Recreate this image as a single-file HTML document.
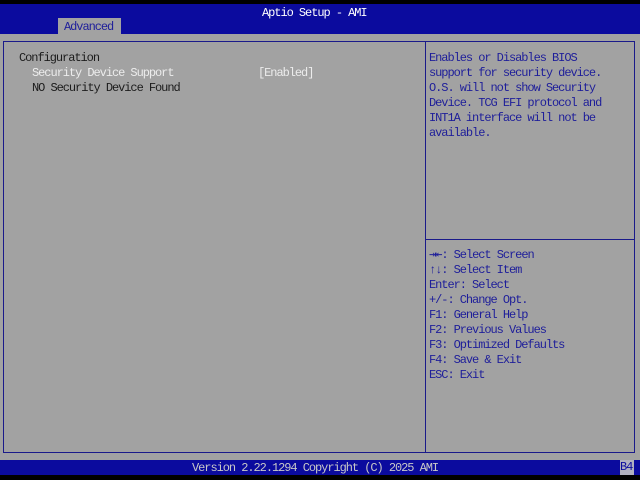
<!DOCTYPE html>
<html><head><style>
*{margin:0;padding:0;box-sizing:border-box}
body{width:640px;height:480px;background:#000;position:relative;overflow:hidden;font-family:"Liberation Mono","DejaVu Sans Mono",monospace;font-size:12px;letter-spacing:-1.05px}
.a{position:absolute;white-space:pre;line-height:15px}
#hdr{position:absolute;left:0;top:4px;width:640px;height:30px;background:#0b0b9e}
#body{position:absolute;left:0;top:34px;width:640px;height:426px;background:#a2a2a2}
#frame{position:absolute;left:3px;top:41px;width:632px;height:412px;border:1px solid #1a1a8a}
#div{position:absolute;left:425px;top:41px;width:1px;height:412px;background:#1a1a8a}
#hl{position:absolute;left:426px;top:239px;width:208px;height:1px;background:#1a1a8a}
#ftr{position:absolute;left:0;top:460px;width:640px;height:15px;background:#0b0b9e}
.w{color:#fff}.d{color:#1c1c1c}.l{color:#ececec}.b{color:#1e1e9a}
</style></head><body>
<div id="hdr"></div>
<div class="a w" style="left:262px;top:6px">Aptio Setup - AMI</div>
<div style="position:absolute;left:58px;top:18px;width:63px;height:16px;background:#a2a2a2"></div>
<div class="a" style="left:64px;top:20px;color:#1e1e9a">Advanced</div>
<div id="body"></div>
<div id="frame"></div>
<div id="div"></div>
<div id="hl"></div>
<div class="a d" style="left:19px;top:51px">Configuration</div>
<div class="a l" style="left:32px;top:66px">Security Device Support</div>
<div class="a l" style="left:258px;top:66px">[Enabled]</div>
<div class="a d" style="left:32px;top:81px">NO Security Device Found</div>
<div class="a b" style="left:429px;top:51px">Enables or Disables BIOS
support for security device.
O.S. will not show Security
Device. TCG EFI protocol and
INT1A interface will not be
available.</div>
<div class="a b" style="left:429px;top:248px">⇥⇤: Select Screen
↑↓: Select Item
Enter: Select
+/-: Change Opt.
F1: General Help
F2: Previous Values
F3: Optimized Defaults
F4: Save &amp; Exit
ESC: Exit</div>
<div id="ftr"></div>
<div class="a" style="left:192px;top:461px;color:#c8c8c8">Version 2.22.1294 Copyright (C) 2025 AMI</div>
<div class="a" style="left:620px;top:460px;width:14px;height:15px;background:#b0b0c0;color:#0b0b9e">B4</div>
</body></html>
